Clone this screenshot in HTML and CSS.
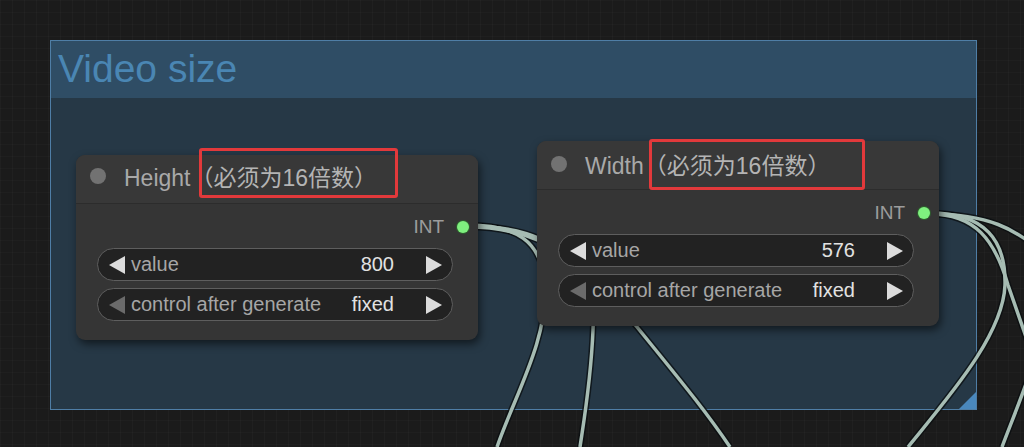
FILE: index.html
```html
<!DOCTYPE html>
<html lang="en">
<head>
    <meta charset="UTF-8">
    <meta name="viewport" content="width=device-width, initial-scale=1.0">
    <title>Video size</title>
    <link rel="stylesheet" href="styles.css">
</head>
<body>
    <div class="canvas">
        <!-- Group box -->
        <div class="group">
            <div class="group-title">Video size</div>
            <div class="group-body"></div>
            <div class="group-resize"></div>
        </div>

        <!-- Links between nodes -->
        <svg class="wires" width="1024" height="447" viewBox="0 0 1024 447">
            <g class="wire-outline">
                <path d="M468 225 C 515 225, 542 240, 545 285 C 548 340, 515 395, 497 447"/>
                <path d="M468 226 C 560 226, 596 270, 593 330 C 591 380, 584 420, 580 447"/>
                <path d="M468 227 C 560 227, 600 282, 637 327 C 680 380, 705 410, 730 447"/>
                <path d="M930 213 C 985 213, 1006 240, 1005 285 C 1003 335, 950 395, 908 447"/>
                <path d="M930 214 C 990 214, 1015 230, 1040 250"/>
                <path d="M930 214 C 975 214, 995 240, 1008 285 L 1034 360"/>
                <path d="M1034 360 C 1025 390, 1012 420, 1002 447"/>
            </g>
            <g class="wire-line">
                <path d="M468 225 C 515 225, 542 240, 545 285 C 548 340, 515 395, 497 447"/>
                <path d="M468 226 C 560 226, 596 270, 593 330 C 591 380, 584 420, 580 447"/>
                <path d="M468 227 C 560 227, 600 282, 637 327 C 680 380, 705 410, 730 447"/>
                <path d="M930 213 C 985 213, 1006 240, 1005 285 C 1003 335, 950 395, 908 447"/>
                <path d="M930 214 C 990 214, 1015 230, 1040 250"/>
                <path d="M930 214 C 975 214, 995 240, 1008 285 L 1034 360"/>
                <path d="M1034 360 C 1025 390, 1012 420, 1002 447"/>
            </g>
        </svg>

        <!-- Height node -->
        <div class="node node-height">
            <div class="node-title">
                <span class="node-dot"></span>
                <span class="node-name">Height<span class="mark mark-height">（必须为16倍数）</span></span>
            </div>
            <div class="node-body">
                <div class="output">
                    <span class="output-label">INT</span>
                    <span class="output-dot"></span>
                </div>
                <div class="widget">
                    <span class="arrow arrow-left"></span>
                    <span class="widget-label">value</span>
                    <span class="widget-value">800</span>
                    <span class="arrow arrow-right"></span>
                </div>
                <div class="widget">
                    <span class="arrow arrow-left off"></span>
                    <span class="widget-label">control after generate</span>
                    <span class="widget-value">fixed</span>
                    <span class="arrow arrow-right"></span>
                </div>
            </div>
        </div>

        <!-- Width node -->
        <div class="node node-width">
            <div class="node-title">
                <span class="node-dot"></span>
                <span class="node-name">Width<span class="mark mark-width">（必须为16倍数）</span></span>
            </div>
            <div class="node-body">
                <div class="output">
                    <span class="output-label">INT</span>
                    <span class="output-dot"></span>
                </div>
                <div class="widget">
                    <span class="arrow arrow-left"></span>
                    <span class="widget-label">value</span>
                    <span class="widget-value">576</span>
                    <span class="arrow arrow-right"></span>
                </div>
                <div class="widget">
                    <span class="arrow arrow-left off"></span>
                    <span class="widget-label">control after generate</span>
                    <span class="widget-value">fixed</span>
                    <span class="arrow arrow-right"></span>
                </div>
            </div>
        </div>
    </div>
</body>
</html>
```

FILE: styles.css
```css
body {
    margin: 0;
    background-color: #1c1c1c;
    font-family: "Liberation Sans", Arial, "Noto Sans CJK SC", sans-serif;
    overflow: hidden;
}

.canvas {
    position: relative;
    width: 1024px;
    height: 447px;
    overflow: hidden;
    background-color: #1b1b1b;
    background-image:
        linear-gradient(90deg, rgba(255, 255, 255, 0.025) 1px, transparent 1px),
        linear-gradient(rgba(255, 255, 255, 0.015) 1px, transparent 1px);
    background-size: 12px 12px;
}

/* Group */
.group {
    position: absolute;
    left: 50px;
    top: 40px;
    width: 925px;
    height: 368px;
    border: 1px solid #4f7ea6;
    display: flex;
    flex-direction: column;
    z-index: 0;
}

.group-title {
    height: 57px;
    line-height: 55px;
    padding-left: 7px;
    font-size: 39px;
    color: #4a86b3;
    background-color: #2f4d65;
}

.group-body {
    flex: 1;
    background-color: #263846;
}

.group-resize {
    position: absolute;
    right: 0;
    bottom: 0;
    width: 0;
    height: 0;
    border-left: 17px solid transparent;
    border-bottom: 17px solid #4a88bd;
}

/* Wires */
.wires {
    position: absolute;
    left: 0;
    top: 0;
    z-index: 1;
}

.wire-outline path {
    fill: none;
    stroke: rgba(10, 14, 16, 0.75);
    stroke-width: 6.5;
}

.wire-line path {
    fill: none;
    stroke: #a6bcb3;
    stroke-width: 3.5;
}

/* Nodes */
.node {
    position: absolute;
    width: 402px;
    background-color: #353535;
    border-radius: 9px;
    box-shadow: 2px 4px 8px rgba(0, 0, 0, 0.55);
    z-index: 2;
}

.node-height {
    left: 76px;
    top: 155px;
}

.node-width {
    left: 537px;
    top: 141px;
}

.node-title {
    height: 45px;
    padding-bottom: 3px;
    display: flex;
    align-items: center;
    padding-left: 14px;
    border-bottom: 1px solid #2c2c2c;
    background-color: #383838;
    border-radius: 9px 9px 0 0;
}

.node-height .node-title {
    height: 41px;
    padding-bottom: 7px;
}

.node-dot {
    width: 16px;
    height: 16px;
    border-radius: 50%;
    background-color: #727272;
    margin-right: 18px;
}

.node-name {
    font-size: 23px;
    color: #a9a9a9;
    white-space: nowrap;
}

.mark {
    position: relative;
    color: #b4b4b4;
}

/* red annotation box drawn over the title */
.mark::after {
    content: "";
    position: absolute;
    border: 3px solid #e2393b;
    border-radius: 3px;
}

.mark-height::after {
    top: -17px;
    bottom: -7px;
    left: 9px;
    right: -21px;
}

.mark-width::after {
    top: -14px;
    bottom: -11px;
    left: 5px;
    right: -35px;
}

.node-body {
    padding: 10px 25px 19px 21px;
    display: flex;
    flex-direction: column;
    gap: 7px;
}

.output {
    height: 26px;
    margin-bottom: 1px;
    margin-right: -16px;
    display: flex;
    align-items: center;
    justify-content: flex-end;
    gap: 13px;
}

.output-label {
    font-size: 19px;
    color: #9c9c9c;
}

.output-dot {
    width: 12px;
    height: 12px;
    border-radius: 50%;
    background-color: #7ff07f;
    box-shadow: 0 0 0 1px #2f5f2f;
}

.widget {
    height: 31px;
    display: flex;
    align-items: center;
    padding: 0 10px 0 11px;
    background-color: #222222;
    border: 1px solid #5e5e5e;
    border-radius: 17px;
    font-size: 20px;
}

.widget-label {
    color: #a6a6a6;
    margin-left: 6px;
    flex: 1;
    white-space: nowrap;
}

.widget-value {
    color: #e2e2e2;
    margin-right: 32px;
}

.arrow {
    width: 0;
    height: 0;
    border-top: 9px solid transparent;
    border-bottom: 9px solid transparent;
}

.arrow-left {
    border-right: 16px solid #dcdcdc;
}

.arrow-left.off {
    border-right-color: #6b6b6b;
}

.arrow-right {
    border-left: 16px solid #dcdcdc;
}
```
